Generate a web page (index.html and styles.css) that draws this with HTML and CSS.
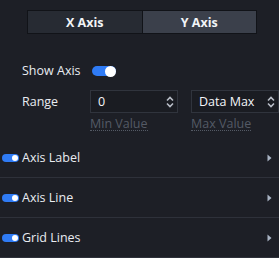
FILE: index.html
```html
<!DOCTYPE html>
<html>
<head>
<meta charset="utf-8">
<link rel="stylesheet" href="styles.css">
</head>
<body>
<div class="panel">
  <div class="tabs">
    <div class="tab">X Axis</div>
    <div class="tab active">Y Axis</div>
  </div>
  <div class="form">
    <div class="row show">
      <span class="label">Show Axis</span>
      <span class="switch"><span class="knob"></span></span>
    </div>
    <div class="row range">
      <span class="label range-label">Range</span>
      <div class="fields">
        <div class="field">
          <div class="input"><span class="val">0</span>
            <svg class="spin" width="8" height="12" viewBox="0 0 8 12"><path d="M1 4.5 L4 1.5 L7 4.5 M1 7.5 L4 10.5 L7 7.5" fill="none" stroke="#b9bec8" stroke-width="1.6"/></svg>
          </div>
          <span class="hint">Min Value</span>
        </div>
        <div class="field">
          <div class="input"><span class="val">Data Max</span>
            <svg class="spin" width="8" height="12" viewBox="0 0 8 12"><path d="M1 4.5 L4 1.5 L7 4.5 M1 7.5 L4 10.5 L7 7.5" fill="none" stroke="#b9bec8" stroke-width="1.6"/></svg>
          </div>
          <span class="hint">Max Value</span>
        </div>
      </div>
    </div>
  </div>
  <div class="list">
    <div class="item"><span class="mini"><span class="dot"></span></span><span class="name">Axis Label</span><svg class="chev" width="5" height="8" viewBox="0 0 5 8"><path d="M0.5 0.5 L4.5 4 L0.5 7.5 Z" fill="#a9b4c4"/></svg></div>
    <div class="item"><span class="mini"><span class="dot"></span></span><span class="name">Axis Line</span><svg class="chev" width="5" height="8" viewBox="0 0 5 8"><path d="M0.5 0.5 L4.5 4 L0.5 7.5 Z" fill="#a9b4c4"/></svg></div>
    <div class="item"><span class="mini"><span class="dot"></span></span><span class="name">Grid Lines</span><svg class="chev" width="5" height="8" viewBox="0 0 5 8"><path d="M0.5 0.5 L4.5 4 L0.5 7.5 Z" fill="#a9b4c4"/></svg></div>
  </div>
</div>
</body>
</html>
```
FILE: styles.css
```css
html, body {
  margin: 0;
  padding: 0;
  background: #1d1f26;
}
body {
  width: 279px;
  height: 258px;
  overflow: hidden;
  font-family: "Open Sans", "Noto Sans", sans-serif;
  font-size: 12.5px;
  color: #e9ecf1;
}
.panel {
  padding-top: 10px;
}
.tabs {
  display: flex;
  margin-left: 27px;
  width: 230px;
  height: 24px;
  box-sizing: border-box;
  border: 1px solid #111318;
}
.tab {
  flex: 1;
  display: flex;
  align-items: center;
  justify-content: center;
  background: #272b33;
  font-weight: 700;
  font-size: 12.5px;
  color: #f2f4f7;
}
.tab.active {
  background: #3b404b;
  border-left: 1px solid #111318;
}
.form {
  padding-left: 22px;
}
.row {
  display: flex;
  align-items: center;
}
.show {
  margin-top: 31px;
  height: 12px;
}
.label {
  line-height: 12px;
}
.switch {
  margin-left: 11px;
  width: 24px;
  height: 10px;
  border-radius: 5px;
  background: #2f7bf5;
  position: relative;
}
.knob {
  position: absolute;
  right: 0;
  top: -0.5px;
  width: 11px;
  height: 11px;
  border-radius: 50%;
  background: #ffffff;
}
.range {
  margin-top: 13px;
  align-items: flex-start;
}
.range-label {
  width: 68px;
  line-height: 23px;
}
.fields {
  display: flex;
  gap: 13px;
}
.field {
  display: flex;
  flex-direction: column;
  width: 88px;
}
.input {
  height: 23px;
  box-sizing: border-box;
  border: 1px solid #30343d;
  background: #1a1c22;
  display: flex;
  align-items: center;
  justify-content: space-between;
  padding: 0 3px 0 7px;
}
.val {
  color: #f4f6f9;
}
.spin {
  display: block;
}
.hint {
  margin-top: 5px;
  color: #545a65;
  line-height: 12px;
  align-self: flex-start;
  border-bottom: 1px dotted #545a65;
}
.list {
  margin-top: 7px;
}
.item {
  height: 40px;
  box-sizing: border-box;
  border-bottom: 1px solid #2e313a;
  display: flex;
  align-items: center;
  padding-left: 2px;
}
.mini {
  width: 17px;
  height: 8px;
  border-radius: 4px;
  background: #2f7bf5;
  position: relative;
}
.dot {
  position: absolute;
  right: 1px;
  top: 1px;
  width: 6px;
  height: 6px;
  border-radius: 50%;
  background: #ffffff;
}
.name {
  margin-left: 3px;
  flex: 1;
}
.chev {
  margin-right: 7px;
  display: block;
}
```
